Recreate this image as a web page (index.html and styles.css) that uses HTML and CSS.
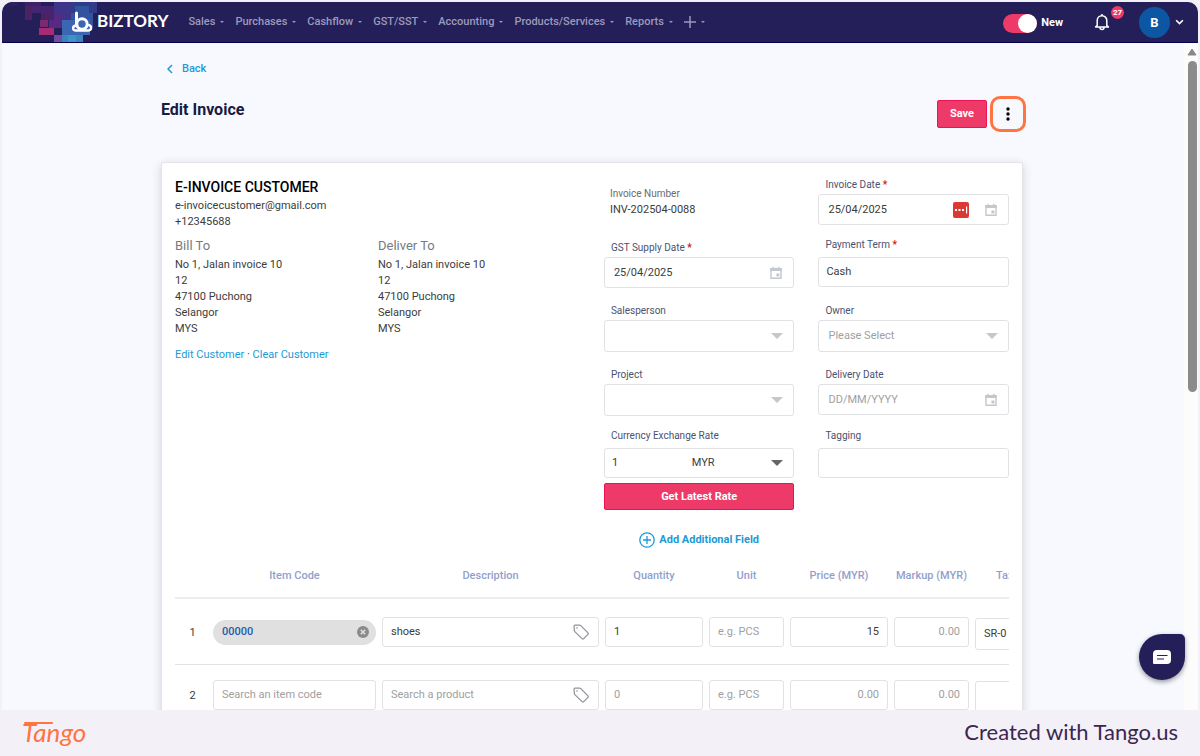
FILE: index.html
```
<!DOCTYPE html>
<html lang="en">
<head>
    <meta charset="utf-8">
    <meta name="viewport" content="width=device-width, initial-scale=1">
    <title>Edit Invoice</title>
    <link rel="stylesheet" href="styles.css">
</head>
<body>

    <!-- shared icons -->
    <svg class="sprite" aria-hidden="true">
        <symbol id="calendar" viewBox="0 0 14 14">
            <path fill="none" stroke="currentColor" stroke-width="1.4" d="M2 2.7h10v9.6H2z"/>
            <path fill="currentColor" d="M1.4 2h11.2v3H1.4zM3.4 .8h1.4v2H3.4zM9.2 .8h1.4v2H9.2zM7.4 7.6h3v3h-3z"/>
        </symbol>
        <symbol id="tag" viewBox="0 0 18 18">
            <path fill="none" stroke="currentColor" stroke-width="1.2" stroke-linejoin="round" d="M2 3.2q0-1.2 1.2-1.2l4.6.2q.6 0 1 .4l7.2 7.2q.8.8 0 1.6l-4.3 4.3q-.8.8-1.6 0L2.8 8.6q-.4-.4-.4-1z"/>
            <circle cx="5" cy="5" r=".8" fill="currentColor"/>
        </symbol>
    </svg>

    <div class="app">
        <header class="topbar">
            <a class="logo" href="#" aria-label="Biztory">
                <svg class="pixels" viewBox="0 0 98 40" aria-hidden="true">
                    <path fill="#2f215f" d="M8 0h8v4H8zM40 18h14v7H40z"/>
                    <path fill="#3a2264" d="M23 0h16v4H23z"/>
                    <path fill="#4c2260" d="M23 4h16v7H23zM23 11h7v7h-7zM39 11h8v7h-8z"/>
                    <path fill="#46246f" d="M30 4h24v7H30zM47 11h7v14h-7z"/>
                    <path fill="#7a2a72" d="M38 18h8v7h-8z"/>
                    <path fill="#a62a74" d="M37 26h15v7H37z"/>
                    <path fill="#562a82" d="M47 18h6v8h-6zM52 4h9v22h-9z"/>
                    <path fill="#3e3489" d="M52 0h17v11H52zM60 11h10v15H60z"/>
                    <path fill="#754b9f" d="M52 33h8v7h-8z"/>
                    <path fill="#2f3c88" d="M69 0h26v11H69z"/>
                    <path fill="#3153a0" d="M73 4h14v14H69v-7h4zM87 11h4v14h-4z"/>
                    <path fill="#3b66b2" d="M60 18h28v15H60z"/>
                    <path fill="#3a83bd" d="M60 33h21v7H60z"/>
                    <path fill="#3f93c8" d="M66 33h8v7h-8z"/>
                </svg>
                <svg class="mark" viewBox="0 0 22 22" aria-hidden="true">
                    <g fill="none" stroke="#fff" stroke-width="3" stroke-linecap="round">
                        <path d="M5.5 2v13"/>
                        <circle cx="11" cy="13" r="5.2"/>
                        <path d="M4.6 14.5C1.5 15 1 19.3 4.5 19.5H17.5c3.5-.2 3.300-4.500.5-5.300" stroke-width="2.4"/>
                    </g>
                </svg>
                <span class="wordmark">BIZTORY</span>
            </a>
            <nav class="menu">
                <a href="#">Sales</a>
                <a href="#">Purchases</a>
                <a href="#">Cashflow</a>
                <a href="#">GST/SST</a>
                <a href="#">Accounting</a>
                <a href="#">Products/Services</a>
                <a href="#">Reports</a>
                <a href="#" aria-label="Create"><svg class="plus" viewBox="0 0 12 12"><path d="M6 0v12M0 6h12" stroke="currentColor" stroke-width="1.5"/></svg></a>
            </nav>
            <div class="tools">
                <label class="switch"><input type="checkbox" checked>New</label>
                <button class="bell" aria-label="Notifications">
                    <svg viewBox="0 0 16 18"><path d="M3.2 12.5V7.5a4.800 4.800 0 0 1 9.600 0v5l1.600 1.400H1.600zM8 2.500V1M6 14.500q0 2 2 2t2-2" fill="none" stroke="#fff" stroke-width="1.5" stroke-linejoin="round"/></svg>
                    <span class="badge">27</span>
                </button>
                <button class="account" aria-label="Account">
                    <span class="avatar">B</span>
                    <svg class="down" viewBox="0 0 8 6"><path d="M1 1l3 3 3-3" fill="none" stroke="#fff" stroke-width="1.5"/></svg>
                </button>
            </div>
        </header>

        <div class="workspace">
            <main class="page">
                <a class="back" href="#"><svg viewBox="0 0 6 10"><path d="M5 1L1 5l4 4" fill="none" stroke="currentColor" stroke-width="1.5"/></svg>Back</a>
                <div class="page-head">
                    <h1>Edit Invoice</h1>
                    <button class="primary save">Save</button>
                    <button class="more" aria-label="More actions"><svg viewBox="0 0 4 14"><circle cx="2" cy="2" r="1.7"/><circle cx="2" cy="7" r="1.7"/><circle cx="2" cy="12" r="1.7"/></svg></button>
                </div>

                <form class="card">
                    <div class="details">
                        <section class="customer">
                            <h2>E-INVOICE CUSTOMER</h2>
                            <p>e-invoicecustomer@gmail.com<br>+12345688</p>
                            <div class="addresses">
                                <div>
                                    <h3>Bill To</h3>
                                    <p>No 1, Jalan invoice 10<br>12<br>47100 Puchong<br>Selangor<br>MYS</p>
                                </div>
                                <div>
                                    <h3>Deliver To</h3>
                                    <p>No 1, Jalan invoice 10<br>12<br>47100 Puchong<br>Selangor<br>MYS</p>
                                </div>
                            </div>
                            <p class="links"><a href="#">Edit Customer</a> · <a href="#">Clear Customer</a></p>
                        </section>

                        <section class="fields">
                            <div class="number">
                                <span>Invoice Number</span>
                                <p>INV-202504-0088</p>
                            </div>
                            <div class="field">
                                <label for="invoice-date">Invoice Date <b>*</b></label>
                                <div class="box">
                                    <input id="invoice-date" type="text" value="25/04/2025">
                                    <svg class="filler" viewBox="0 0 16 16"><rect width="16" height="16" rx="2" fill="#db3a34"/><path fill="#fff" d="M2 7h2v2H2zM5.5 7h2v2h-2zM9 7h2v2H9zM13 4.500h1.200v7H13z"/></svg>
                                    <svg class="calendar"><use href="#calendar"/></svg>
                                </div>
                            </div>
                            <div class="field">
                                <label for="supply-date">GST Supply Date <b>*</b></label>
                                <div class="box">
                                    <input id="supply-date" type="text" value="25/04/2025">
                                    <svg class="calendar"><use href="#calendar"/></svg>
                                </div>
                            </div>
                            <div class="field plain">
                                <label for="term">Payment Term <b>*</b></label>
                                <div class="box"><input id="term" type="text" value="Cash"></div>
                            </div>
                            <div class="field">
                                <label for="salesperson">Salesperson</label>
                                <div class="box drop"><select id="salesperson"><option></option></select></div>
                            </div>
                            <div class="field">
                                <label for="owner">Owner</label>
                                <div class="box drop"><select id="owner"><option>Please Select</option></select></div>
                            </div>
                            <div class="field">
                                <label for="project">Project</label>
                                <div class="box drop"><select id="project"><option></option></select></div>
                            </div>
                            <div class="field">
                                <label for="delivery-date">Delivery Date</label>
                                <div class="box">
                                    <input id="delivery-date" type="text" placeholder="DD/MM/YYYY">
                                    <svg class="calendar"><use href="#calendar"/></svg>
                                </div>
                            </div>
                            <div class="field plain">
                                <label for="rate">Currency Exchange Rate</label>
                                <div class="box drop dark">
                                    <input id="rate" type="text" value="1">
                                    <select aria-label="Currency"><option>MYR</option></select>
                                </div>
                                <button class="primary rate" type="button">Get Latest Rate</button>
                            </div>
                            <div class="field plain">
                                <label for="tagging">Tagging</label>
                                <div class="box"><input id="tagging" type="text"></div>
                            </div>
                            <button class="add" type="button">
                                <svg viewBox="0 0 16 16"><circle cx="8" cy="8" r="7.2"/><path d="M8 4v8M4 8h8"/></svg>
                                Add Additional Field
                            </button>
                        </section>
                    </div>

                    <div class="items">
                        <table>
                            <colgroup>
                                <col class="c-no"><col class="c-code"><col class="c-desc"><col class="c-wide"><col class="c-slim"><col class="c-wide"><col class="c-slim"><col class="c-tax">
                            </colgroup>
                            <thead>
                                <tr><th></th><th>Item Code</th><th>Description</th><th>Quantity</th><th>Unit</th><th>Price (MYR)</th><th>Markup (MYR)</th><th class="tax">Tax</th></tr>
                            </thead>
                            <tbody>
                                <tr>
                                    <td>1</td>
                                    <td>
                                        <div class="chip">00000
                                            <button type="button" aria-label="Remove item"><svg viewBox="0 0 12 12"><circle cx="6" cy="6" r="6" fill="#8b8b8b"/><path d="M3.8 3.8l4.400 4.400M8.200 3.800L3.800 8.200" stroke="#e0e0e0" stroke-width="1.5"/></svg></button>
                                        </div>
                                    </td>
                                    <td><div class="box"><input type="text" aria-label="Description" value="shoes"><svg class="tag"><use href="#tag"/></svg></div></td>
                                    <td><div class="box"><input type="text" aria-label="Quantity" value="1"></div></td>
                                    <td><div class="box"><input type="text" aria-label="Unit" placeholder="e.g. PCS"></div></td>
                                    <td><div class="box"><input class="amount" type="text" aria-label="Price" value="15"></div></td>
                                    <td><div class="box"><input class="amount" type="text" aria-label="Markup" placeholder="0.00"></div></td>
                                    <td><div class="box tall"><select aria-label="Tax"><option>SR-0</option></select></div></td>
                                </tr>
                                <tr class="blank">
                                    <td>2</td>
                                    <td><div class="box"><input type="text" aria-label="Item code" placeholder="Search an item code"></div></td>
                                    <td><div class="box"><input type="text" aria-label="Description" placeholder="Search a product"><svg class="tag"><use href="#tag"/></svg></div></td>
                                    <td><div class="box"><input type="text" aria-label="Quantity" placeholder="0"></div></td>
                                    <td><div class="box"><input type="text" aria-label="Unit" placeholder="e.g. PCS"></div></td>
                                    <td><div class="box"><input class="amount" type="text" aria-label="Price" placeholder="0.00"></div></td>
                                    <td><div class="box"><input class="amount" type="text" aria-label="Markup" placeholder="0.00"></div></td>
                                    <td><div class="box tall"><select aria-label="Tax"><option></option></select></div></td>
                                </tr>
                            </tbody>
                        </table>
                    </div>
                </form>
            </main>

            <div class="scrollbar">
                <svg viewBox="0 0 10 8"><path d="M5 1l4 6H1z" fill="#888" stroke="#888" stroke-linejoin="round"/></svg>
                <div class="thumb"></div>
            </div>

            <button class="chat" aria-label="Open chat">
                <svg viewBox="0 0 18 14"><path fill="#fff" d="M4 0h10q4 0 4 4v6q0 4-4 4H1q-1 0-1-1V4q0-4 4-4z"/><path d="M4 5.500h10.500M4 9h7" stroke="#241f58" stroke-width="1.2"/></svg>
            </button>
        </div>
    </div>

    <footer class="footer">
        <a class="tango" href="#">Tango</a>
        <span>Created with Tango.us</span>
    </footer>

</body>
</html>
```

FILE: styles.css
```
*{
    box-sizing:border-box;
}

body{
    margin:0;
    height:100vh;
    padding:2px 2px 0;
    display:flex;
    flex-direction:column;
    background-color:#f3f1f7;
    color:#3c3c3c;
    font-family:Roboto, Arial, sans-serif;
    font-size:11px;
    line-height:16px;
}

h1, h2, h3, p{
    margin:0;
}

a{
    color:#1c9ad6;
    text-decoration:none;
}

button, input, select{
    font:inherit;
    color:inherit;
    background:none;
    border:none;
    padding:0;
    margin:0;
}

button{
    cursor:pointer;
}

svg{
    flex:none;
    display:block;
}

.sprite{
    position:absolute;
    width:0;
    height:0;
}

.app{
    flex:1;
    min-height:0;
    display:flex;
    flex-direction:column;
    overflow:hidden;
    border-radius:10px 10px 0 0;
    background-color:#f8f9fe;
}

/* top bar */

.topbar{
    flex:none;
    display:flex;
    align-items:center;
    height:41px;
    background-color:#241f58;
    border-bottom:1px solid #05004b;
}

.logo{
    position:relative;
    display:flex;
    align-items:center;
    gap:4px;
    height:40px;
    padding-left:69px;
    color:white;
}

.pixels{
    position:absolute;
    left:0;
    top:0;
    width:98px;
    height:40px;
}

.mark{
    position:relative;
    width:22px;
    height:22px;
}

.wordmark{
    padding-bottom:2px;
    font-family:Lato, sans-serif;
    font-size:17px;
    font-weight:bold;
}

.menu{
    display:flex;
    align-items:center;
    gap:11px;
    margin-left:20px;
    padding-bottom:1px;
}

.menu a{
    display:flex;
    align-items:center;
    gap:5px;
    color:#9c9abb;
    font-weight:500;
}

.menu a::after{
    content:"";
    border:2px solid transparent;
    border-top-color:#9c9abb;
    border-bottom:none;
}

.plus{
    width:12px;
    height:12px;
}

.tools{
    display:flex;
    align-items:center;
    margin-left:auto;
    padding-right:14px;
    color:white;
}

.switch{
    display:flex;
    align-items:center;
    gap:4px;
    padding-top:2px;
    font-weight:bold;
}

.switch input{
    appearance:none;
    display:flex;
    justify-content:flex-end;
    width:34px;
    height:19px;
    border-radius:10px;
    background-color:#ee3a68;
}

.switch input::before{
    content:"";
    width:19px;
    height:19px;
    border-radius:50%;
    background-color:white;
}

.bell{
    position:relative;
    margin-left:31px;
}

.bell svg{
    width:16px;
    height:18px;
}

.badge{
    position:absolute;
    left:17px;
    top:-7px;
    width:13px;
    height:13px;
    border-radius:50%;
    background-color:#ee3a68;
    font-size:8px;
    font-weight:bold;
    line-height:13px;
}

.account{
    display:flex;
    align-items:center;
    gap:5px;
    margin-left:29px;
}

.avatar{
    width:31px;
    height:31px;
    border-radius:50%;
    background-color:#0b57a4;
    font-size:13px;
    font-weight:bold;
    line-height:31px;
}

.down{
    width:9px;
    height:7px;
}

/* page */

.workspace{
    position:relative;
    flex:1;
    min-height:0;
    display:flex;
    overflow:hidden;
}

.page{
    flex:1;
    min-width:0;
    padding:18px 161px 0 159px;
}

.back{
    display:inline-flex;
    align-items:center;
    gap:9px;
    padding-left:6px;
    font-weight:500;
}

.back svg{
    width:6px;
    height:10px;
}

.page-head{
    display:flex;
    align-items:center;
    height:36px;
    margin:17px -3px 30px 0;
}

h1{
    margin-right:auto;
    padding-bottom:8px;
    color:#171b42;
    font-size:16px;
    font-weight:bold;
}

.primary{
    border:1px solid #ec1254;
    border-radius:2px;
    background-color:#ee3a68;
    color:white;
    font-weight:bold;
}

.save{
    width:50px;
    height:28px;
}

.more{
    display:flex;
    align-items:center;
    justify-content:center;
    width:36px;
    height:36px;
    margin-left:3px;
    border:3px solid #ff7442;
    border-radius:10px;
}

.more svg{
    width:4px;
    height:14px;
}

.card{
    padding:11px 13px;
    border:1px solid #e3e4e8;
    border-radius:3px;
    background-color:white;
    box-shadow:0 2px 10px rgba(40,45,70,.18);
}

.details{
    display:grid;
    grid-template-columns:18fr 17fr;
}

.customer{
    padding-top:5px;
}

h2{
    margin-bottom:2px;
    color:black;
    font-size:14px;
    font-weight:500;
    line-height:17px;
}

h3{
    margin-bottom:3px;
    color:#757b82;
    font-size:13px;
    font-weight:normal;
    line-height:17px;
}

.addresses{
    display:grid;
    grid-template-columns:203px 1fr;
    margin-top:7px;
}

.links{
    margin-top:10px;
}

/* fields */

.fields{
    display:grid;
    grid-template-columns:1fr 1fr;
    gap:12px 24px;
    align-items:start;
}

.number{
    padding:12px 0 0 6px;
}

.number span{
    color:#6b6b6b;
    font-size:10px;
}

.field label{
    display:block;
    height:20px;
    padding:4px 0 0 7px;
    color:#4b5270;
    font-size:10px;
    line-height:14px;
}

.field label b{
    color:#d21616;
}

.plain label{
    padding-top:1px;
}

.box{
    display:flex;
    align-items:center;
    height:31px;
    padding:0 10px 0 9px;
    border:1px solid #e2e2e4;
    border-radius:3px;
    background-color:white;
}

.plain .box{
    height:30px;
    padding-left:7px;
}

.box input, .box select{
    flex:1;
    min-width:0;
    width:100%;
    outline:none;
    appearance:none;
}

::placeholder{
    color:#a0a0a0;
    opacity:1;
}

.drop{
    height:32px;
    color:#a0a0a0;
}

.drop::after{
    content:"";
    border:6px solid transparent;
    border-top-color:#c3c7ce;
    border-bottom:none;
}

.dark{
    color:#3c3c3c;
}

.dark::after{
    border-top-color:#666;
}

.filler{
    width:16px;
    height:16px;
    margin-right:15px;
}

.calendar{
    width:14px;
    height:14px;
    color:#c3c7ce;
}

.rate{
    width:100%;
    height:27px;
    margin-top:5px;
}

.add{
    display:flex;
    align-items:center;
    justify-content:center;
    gap:4px;
    margin-top:10px;
    color:#1c9ad6;
    font-weight:bold;
}

.add svg{
    width:16px;
    height:16px;
    fill:none;
    stroke:currentColor;
    stroke-width:1.3;
}

/* line items */

.items{
    overflow:hidden;
    margin-top:13px;
}

table{
    width:955px;
    table-layout:fixed;
    border-collapse:collapse;
}

.c-no{
    width:35px;
}

.c-code{
    width:169px;
}

.c-desc{
    width:223px;
}

.c-wide{
    width:104px;
}

.c-slim{
    width:81px;
}

.c-tax{
    width:158px;
}

th{
    height:37px;
    padding:0 3px 6px;
    border-bottom:2px solid #ececee;
    color:#929fcb;
    font-weight:500;
}

.tax{
    padding-left:24px;
    text-align:left;
}

td{
    height:66px;
    padding:2px 3px 0;
    border-bottom:1px solid #e2e2e4;
}

.blank td{
    height:60px;
}

td:first-child{
    padding:4px 0 0;
    text-align:center;
}

td .box{
    height:30px;
    padding:0 8px;
}

td .tall{
    height:32px;
    margin-top:4px;
}

.amount{
    text-align:right;
}

.chip{
    display:flex;
    align-items:center;
    justify-content:space-between;
    height:25px;
    padding:0 7px 0 9px;
    border-radius:13px;
    background-color:#e0e0e0;
    color:#1d5ba8;
    font-weight:500;
}

.chip svg{
    width:12px;
    height:12px;
}

.tag{
    width:18px;
    height:18px;
    color:#8d909c;
}

.scrollbar{
    flex:none;
    display:flex;
    flex-direction:column;
    align-items:center;
    gap:5px;
    width:14px;
    padding:5px 0 0 2px;
    background-color:#fcfcfc;
}

.scrollbar svg{
    width:10px;
    height:8px;
}

.thumb{
    width:9px;
    height:50%;
    border-radius:5px;
    background-color:#8b8b8b;
}

.chat{
    position:absolute;
    right:13px;
    bottom:30px;
    display:flex;
    align-items:center;
    justify-content:center;
    width:46px;
    height:46px;
    border-radius:50% 5px 50% 50%;
    background-color:#241f58;
    box-shadow:0 2px 5px rgba(0,0,0,.4);
}

.chat svg{
    width:18px;
    height:14px;
}

/* footer */

.footer{
    flex:none;
    display:flex;
    align-items:center;
    justify-content:space-between;
    height:46px;
    padding:0 20px 2px;
    color:#3b2650;
    font-family:Lato, sans-serif;
    font-size:22px;
    line-height:28px;
}

.tango{
    position:relative;
    color:#ff7442;
    font-size:26px;
    font-style:italic;
}

/* long bar of the T */
.tango::before{
    content:"";
    position:absolute;
    left:2px;
    top:4px;
    width:29px;
    height:2px;
    border-radius:1px;
    background-color:#ff7442;
}
```
